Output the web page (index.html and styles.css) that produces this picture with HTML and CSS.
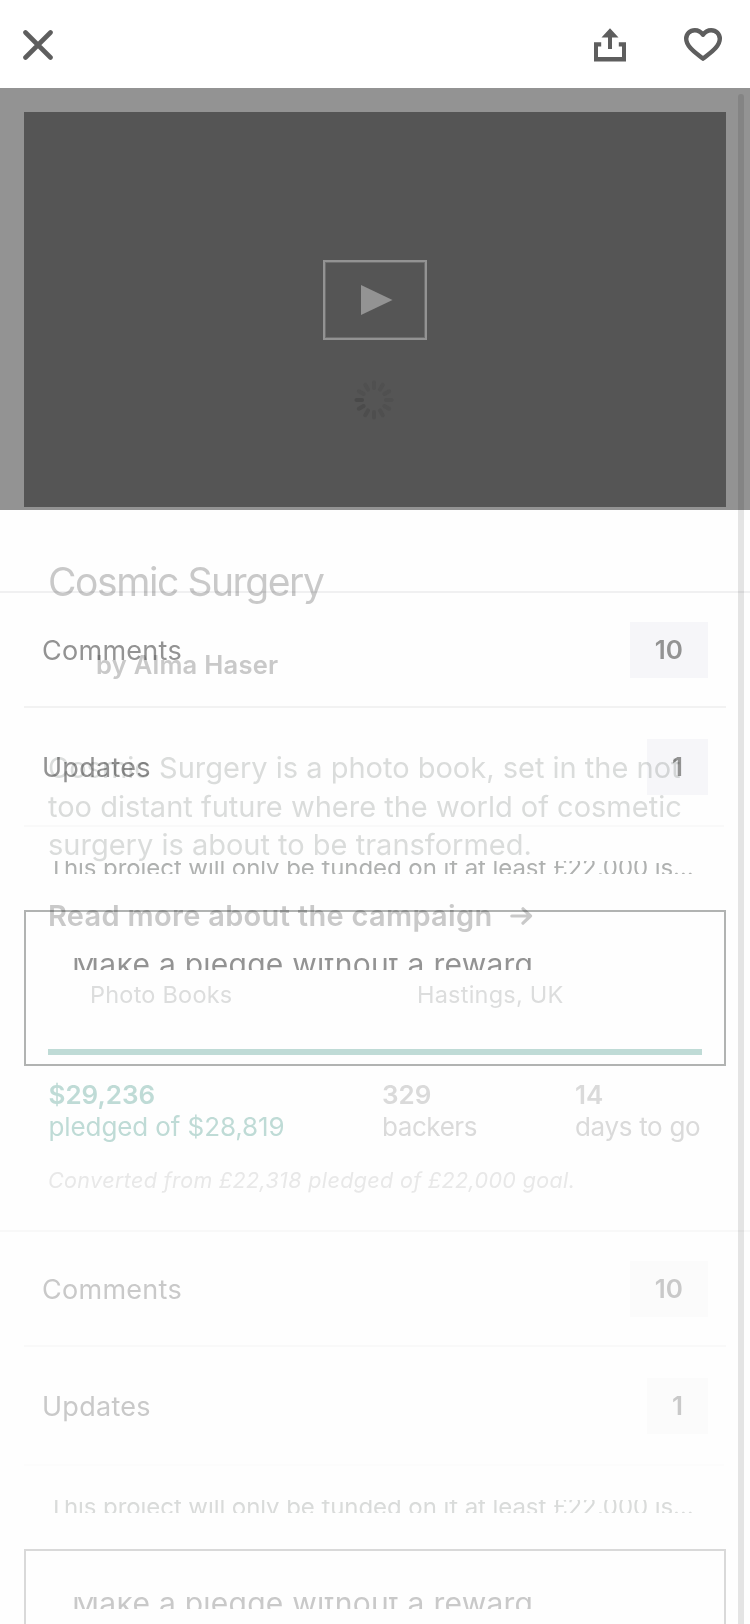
FILE: index.html
```html
<!DOCTYPE html>
<html lang="en">
<head>
<meta charset="utf-8">
<title>Cosmic Surgery</title>
<link rel="stylesheet" href="styles.css">
</head>
<body>
<div class="screen">
  <header class="topbar">
    <svg class="icon-close" width="30" height="30" viewBox="0 0 30 30"><path d="M2.5 2.5 27.5 27.5M27.5 2.5 2.5 27.5"/></svg>
    <div class="actions">
      <svg class="icon-share" width="32" height="34" viewBox="0 0 32 34"><path d="M16 .2 24.5 9.4H18V21H14V9.4H7.5ZM0 14.2H7.2V18.5H4V29H28V18.5H24.8V14.2H32V33.6H0Z"/></svg>
      <svg class="icon-heart" width="38" height="34" viewBox="0 0 38 34"><path d="M19 30.6C12.5 25.2 2.2 19 2.2 10.8 2.2 5.8 6 2.2 10.8 2.2 14.2 2.2 17.2 4 19 6.8 20.8 4 23.8 2.2 27.2 2.2 32 2.2 35.8 5.8 35.8 10.8 35.8 19 25.5 25.2 19 30.6Z"/></svg>
    </div>
  </header>

  <section class="hero">
    <div class="video">
      <div class="play"><svg width="32" height="30" viewBox="0 0 32 30"><path d="M0 0 31.5 15 0 30Z"/></svg></div>
      <svg class="spinner" width="40" height="40" viewBox="-20 -20 40 40">
        <g stroke-width="4" stroke-linecap="round">
          <path d="M-12 0H-17.5" stroke="#494949"/>
          <path d="M-12 0H-17.5" transform="rotate(-30)" stroke="#4b4b4b"/>
          <path d="M-12 0H-17.5" transform="rotate(-60)" stroke="#4d4d4d"/>
          <path d="M-12 0H-17.5" transform="rotate(-90)" stroke="#4e4e4e"/>
          <path d="M-12 0H-17.5" transform="rotate(-120)" stroke="#4f4f4f"/>
          <path d="M-12 0H-17.5" transform="rotate(-150)" stroke="#505050"/>
          <path d="M-12 0H-17.5" transform="rotate(180)" stroke="#505050"/>
          <path d="M-12 0H-17.5" transform="rotate(150)" stroke="#505050"/>
          <path d="M-12 0H-17.5" transform="rotate(120)" stroke="#505050"/>
          <path d="M-12 0H-17.5" transform="rotate(90)" stroke="#505050"/>
          <path d="M-12 0H-17.5" transform="rotate(60)" stroke="#505050"/>
          <path d="M-12 0H-17.5" transform="rotate(30)" stroke="#505050"/>
        </g>
      </svg>
    </div>
  </section>

  <main class="project">
    <h1 class="title">Cosmic Surgery</h1>
    <p class="byline">by Alma Haser</p>
    <p class="blurb">Cosmic Surgery is a photo book, set in the not<br>too distant future where the world of cosmetic<br>surgery is about to be transformed.</p>
    <div class="more"><span>Read more about the campaign</span><svg width="23" height="18" viewBox="0 0 23 18"><path d="M1.8 9H20.5M13 1.8 20.5 9 13 16.2"/></svg></div>
    <div class="meta"><span>Photo Books</span><span>Hastings, UK</span></div>
    <div class="progress"></div>
    <div class="stats">
      <div class="stat pledged"><b>$29,236</b><span>pledged of $28,819</span></div>
      <div class="stat backers"><b>329</b><span>backers</span></div>
      <div class="stat days"><b>14</b><span>days to go</span></div>
    </div>
    <p class="converted">Converted from £22,318 pledged of £22,000 goal.</p>
  </main>

  <section class="panel faded">
    <div class="row first"><span class="label">Comments</span><span class="badge">10</span></div>
    <div class="row second"><span class="label">Updates</span><span class="badge">1</span></div>
    <div class="note"><span>This project will only be funded on if at least £22,000 is…</span></div>
    <div class="pledge"><div class="pledge-text"><span>Make a pledge without a reward</span></div></div>
  </section>

  <section class="panel incoming">
    <div class="row first"><span class="label">Comments</span><span class="badge">10</span></div>
    <div class="row second"><span class="label">Updates</span><span class="badge">1</span></div>
    <div class="note"><span>This project will only be funded on if at least £22,000 is…</span></div>
    <div class="pledge"><div class="pledge-text"><span>Make a pledge without a reward</span></div></div>
  </section>

  <div class="scrollbar"></div>
</div>
</body>
</html>
```
FILE: styles.css
```css
* { box-sizing: border-box; }
body { margin: 0; background: #fefefe; font-family: Inter, "Liberation Sans", sans-serif; }
h1, p { margin: 0; font-weight: 400; }
svg { display: block; flex: none; }
.screen { position: relative; width: 750px; height: 1624px; overflow: hidden; white-space: nowrap; }

.topbar { height: 88px; padding: 0 28px 0 23px; display: flex; justify-content: space-between; background: #fff; }
.icon-close { margin-top: 30px; fill: none; stroke: #5e5e5e; stroke-width: 4.6; stroke-linecap: round; }
.actions { display: flex; gap: 58px; padding-top: 28px; }
.icon-share { fill: #5e5e5e; }
.icon-heart { fill: none; stroke: #5e5e5e; stroke-width: 4.4; stroke-linejoin: round; }

.hero { height: 422px; padding: 24px 24px 3px; background: #939393; }
.video { height: 395px; padding-top: 148px; display: flex; flex-direction: column; align-items: center; background: #555; }
.play { width: 104px; height: 80px; padding: 23px 0 0 36px; border: 2px solid #939393; box-shadow: inset 0 0 0 1px #6e6e6e; }
.play svg { fill: #939393; }
.spinner { margin: 40px 2px 0 0; }

.project { height: 720px; padding: 48px 48px 0; }
.title { font-size: 39px; line-height: 48px; letter-spacing: -1.42px; color: #c9c9c9; }
.byline { margin-top: 44px; padding-left: 48px; font-size: 25.5px; line-height: 30px; letter-spacing: .26px; font-weight: 600; color: #c9c9c9; }
.blurb { margin-top: 69px; font-size: 29px; line-height: 38.5px; color: #dadcdb; }
.more { width: 485px; margin-top: 33px; display: flex; align-items: center; justify-content: space-between; font-size: 29px; line-height: 36px; letter-spacing: .31px; font-weight: 600; color: #c9c9c9; }
.more svg { fill: none; stroke: #c9c9c9; stroke-width: 3.2; stroke-linecap: round; stroke-linejoin: round; }
.meta { margin-top: 46px; padding-left: 42px; display: grid; grid-template-columns: 327px 1fr; font-size: 23.5px; line-height: 30px; letter-spacing: .22px; color: #dcdddd; }
.progress { height: 6px; margin-top: 39.5px; background: #bfdbd6; }
.stats { margin-top: 23.5px; display: grid; grid-template-columns: 334px 193px 1fr; font-size: 26px; line-height: 32px; color: #dadada; }
.stat { display: flex; flex-direction: column; align-items: flex-start; }
.stat b { font-weight: 600; }
.pledged { padding-left: .5px; color: #bfdbd6; }
.pledged span { letter-spacing: -.1px; }
.backers span { letter-spacing: -.42px; }
.days span { letter-spacing: -.32px; }
.converted { margin-top: 23.5px; font-size: 21.5px; line-height: 28px; letter-spacing: .37px; font-style: italic; color: #e8e8e8; }

.panel { border-top: 2px solid #f1f1f2; color: #949494; }
.row { height: 115px; margin: 0 24px; padding: 29px 18px 0; display: flex; justify-content: space-between; border-bottom: 2px solid #f3f3f3; }
.row.second { height: 119px; padding-top: 31px; margin-right: 26px; padding-right: 16px; border-color: #fafafa; }
.label { font-size: 27px; line-height: 58px; letter-spacing: .28px; }
.badge { height: 56px; padding: 0 25px; font-size: 26px; line-height: 56px; font-weight: 600; background: #f7f7fa; }
.note { height: 13px; margin: 34px 0 0 48.5px; overflow: hidden; font-size: 24px; line-height: 14px; letter-spacing: -.07px; color: #b0b2b1; }
.pledge { height: 156px; margin: 36px 24px 0; padding: 46px 0 0 46px; border: 2px solid #b2b4b3; }
.pledge-text { height: 12px; overflow: hidden; font-size: 30px; line-height: 12px; letter-spacing: .25px; }
.faded { color: #c9c9c9; border-color: #f8f8f8; }
.faded .row { border-color: #f9f9f9; }
.faded .row.second { border-color: #fcfcfc; }
.faded .badge { background: #fbfbfb; }
.faded .note { color: #d9dbda; }
.faded .pledge { border-color: #d9d9d9; }

/* incoming transition layer, composited over the project details */
.incoming { position: absolute; left: 0; top: 591px; width: 750px; mix-blend-mode: multiply; }
.scrollbar { position: absolute; left: 738px; top: 94px; width: 6px; height: 1540px; border-radius: 3px; background: rgba(0, 0, 0, .1); }
```
